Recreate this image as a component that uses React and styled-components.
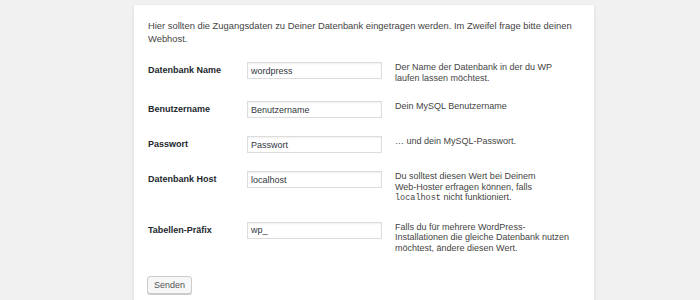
import React from "react";
import styled, { createGlobalStyle } from "styled-components";

const GlobalStyle = createGlobalStyle`
  html, body { margin: 0; padding: 0; }
  body {
    background: #f1f1f1;
    font-family: "Liberation Sans", Arial, sans-serif;
    color: #444;
    overflow: hidden;
  }
`;

const Page = styled.div`
  padding-top: 5px;
  height: 300px;
  box-sizing: border-box;
  overflow: hidden;
`;

const Card = styled.div`
  margin-left: 134px;
  width: 460px;
  min-height: 300px;
  box-sizing: border-box;
  background: #fff;
  box-shadow: 0 1px 3px rgba(0, 0, 0, 0.13);
  padding: 14px 14px 0;
`;

const Intro = styled.p`
  margin: 0 0 8px;
  font-size: 9.4px;
  line-height: 13px;
  color: #444;
`;

const Form = styled.form`
  display: flex;
  flex-direction: column;
`;

const Row = styled.div`
  display: grid;
  grid-template-columns: 99px 135px 190px;
  padding: 9px 0;
  align-items: start;
`;

const Label = styled.label`
  font-size: 9px;
  font-weight: bold;
  line-height: 17px;
  color: #23282d;
`;

const Input = styled.input`
  box-sizing: border-box;
  width: 135px;
  height: 17px;
  margin: 0;
  padding: 0 3px;
  border: 1px solid #ddd;
  box-shadow: inset 0 1px 2px rgba(0, 0, 0, 0.07);
  background: #fff;
  font-family: "Liberation Sans", Arial, sans-serif;
  font-size: 9px;
  color: #32373c;
  outline: none;
`;

const Desc = styled.div`
  margin-left: 13px;
  font-size: 9px;
  line-height: 10.5px;
  color: #444;
`;

const NoWrap = styled.span`
  white-space: nowrap;
`;

const Code = styled.code`
  font-family: "Liberation Mono", "DejaVu Sans Mono", monospace;
  font-size: 8.5px;
`;

const Button = styled.button`
  align-self: flex-start;
  margin: 14px 0 0 -1px;
  height: 18px;
  padding: 0 6px;
  box-sizing: border-box;
  border: 1px solid #ccc;
  border-radius: 3px;
  background: #f7f7f7;
  box-shadow: 0 1px 0 #ccc;
  font-family: "Liberation Sans", Arial, sans-serif;
  font-size: 9px;
  color: #555;
  line-height: 16px;
`;

const fields = [
  {
    id: "dbname",
    label: "Datenbank Name",
    value: "wordpress",
    desc: "Der Name der Datenbank in der du WP laufen lassen möchtest.",
  },
  {
    id: "uname",
    label: "Benutzername",
    value: "Benutzername",
    desc: "Dein MySQL Benutzername",
  },
  {
    id: "pwd",
    label: "Passwort",
    value: "Passwort",
    desc: "… und dein MySQL-Passwort.",
  },
  {
    id: "dbhost",
    label: "Datenbank Host",
    value: "localhost",
    desc: (
      <>
        Du solltest diesen Wert bei Deinem <NoWrap>Web-Hoster</NoWrap> erfragen können, falls{" "}
        <Code>localhost</Code> nicht funktioniert.
      </>
    ),
  },
  {
    id: "prefix",
    label: "Tabellen-Präfix",
    value: "wp_",
    desc: "Falls du für mehrere WordPress-Installationen die gleiche Datenbank nutzen möchtest, ändere diesen Wert.",
  },
];

export default function App() {
  return (
    <>
      <GlobalStyle />
      <Page>
        <Card>
          <Intro>
            Hier sollten die Zugangsdaten zu Deiner Datenbank eingetragen werden. Im Zweifel frage bitte deinen Webhost.
          </Intro>
          <Form onSubmit={(e) => e.preventDefault()}>
            {fields.map((f) => (
              <Row key={f.id}>
                <Label htmlFor={f.id}>{f.label}</Label>
                <Input id={f.id} defaultValue={f.value} />
                <Desc>{f.desc}</Desc>
              </Row>
            ))}
            <Button type="submit">Senden</Button>
          </Form>
        </Card>
      </Page>
    </>
  );
}
